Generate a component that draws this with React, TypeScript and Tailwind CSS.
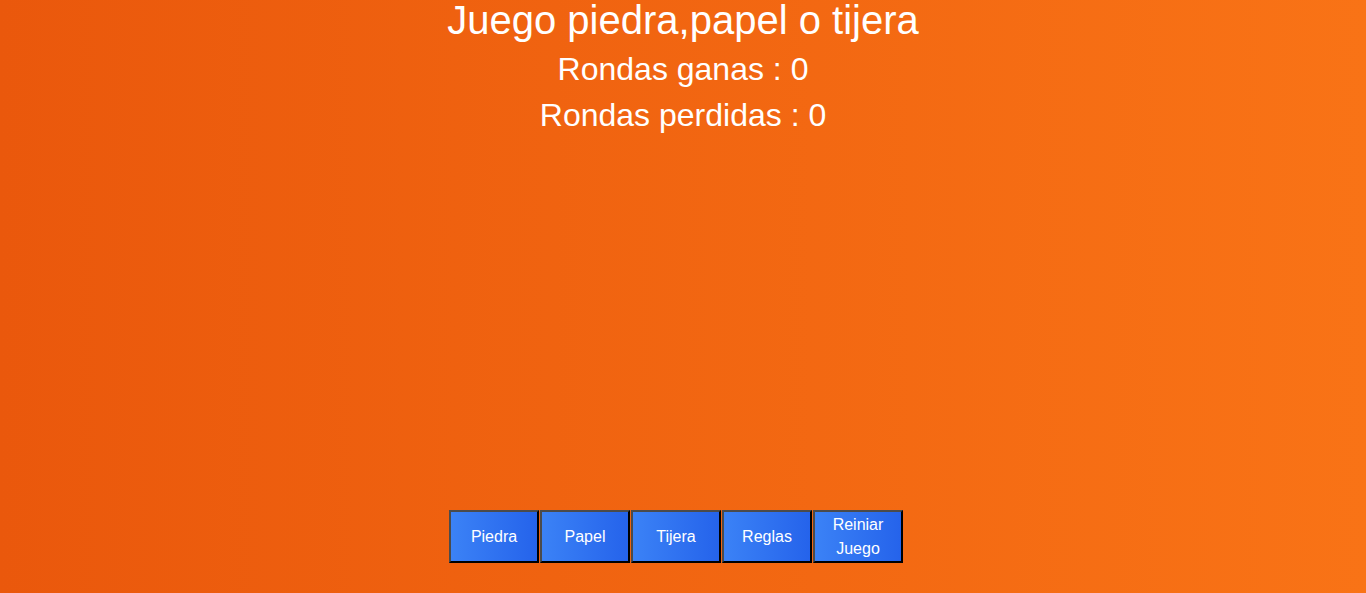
const botones = ["Piedra", "Papel", "Tijera", "Reglas", "Reiniar Juego"];

export default function App() {
  return (
    <div
      className="h-screen flex flex-col items-center bg-linear-to-r/srgb from-[#ea580c] to-[#f97316] text-white"
      style={{ fontFamily: '"Liberation Sans", Arial, sans-serif' }}
    >
      <h1 className="text-[40px] leading-[40px]">Juego piedra,papel o tijera</h1>
      <p className="mt-[6px] text-[32px] leading-[46px]">Rondas ganas : 0</p>
      <p className="text-[32px] leading-[46px]">Rondas perdidas : 0</p>

      <div className="flex-1" />

      <div className="flex gap-px mb-[30px] pr-[14px]">
        {botones.map((b) => (
          <button
            key={b}
            className="w-[90px] h-[53px] px-2 text-base leading-6 border-2 border-t-[#4b4b4b] border-l-[#4b4b4b] border-r-black border-b-black bg-linear-to-r/srgb from-[#3b82f6] to-[#2563eb] text-white"
          >
            {b}
          </button>
        ))}
      </div>
    </div>
  );
}
